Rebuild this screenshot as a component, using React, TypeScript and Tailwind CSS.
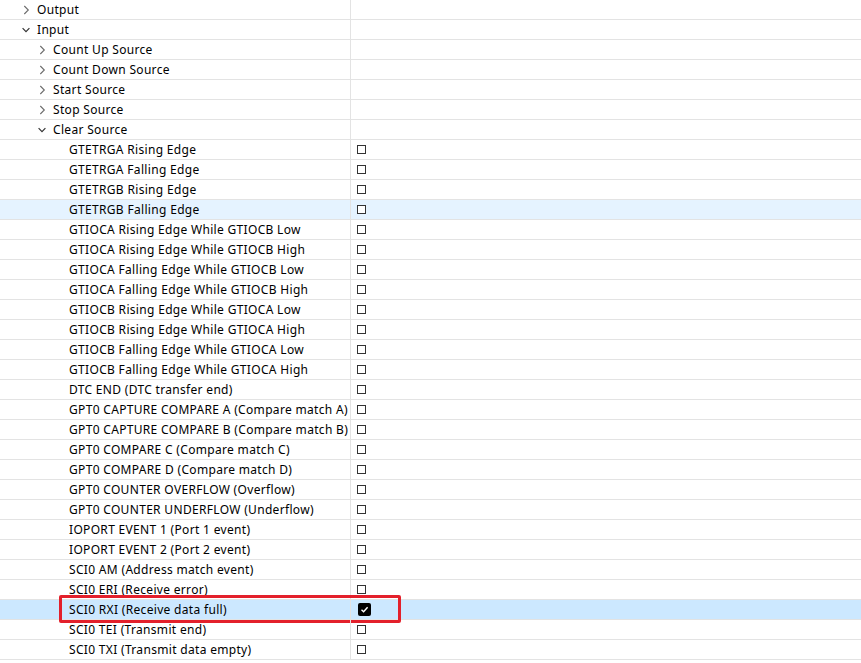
import React from 'react';

type Row = {
  label: string;
  level: 0 | 1 | 2;
  chevron?: 'right' | 'down';
  check?: boolean;
  checked?: boolean;
  hover?: boolean;
  selected?: boolean;
};

const clearItems = [
  'GTETRGA Rising Edge',
  'GTETRGA Falling Edge',
  'GTETRGB Rising Edge',
  'GTETRGB Falling Edge',
  'GTIOCA Rising Edge While GTIOCB Low',
  'GTIOCA Rising Edge While GTIOCB High',
  'GTIOCA Falling Edge While GTIOCB Low',
  'GTIOCA Falling Edge While GTIOCB High',
  'GTIOCB Rising Edge While GTIOCA Low',
  'GTIOCB Rising Edge While GTIOCA High',
  'GTIOCB Falling Edge While GTIOCA Low',
  'GTIOCB Falling Edge While GTIOCA High',
  'DTC END (DTC transfer end)',
  'GPT0 CAPTURE COMPARE A (Compare match A)',
  'GPT0 CAPTURE COMPARE B (Compare match B)',
  'GPT0 COMPARE C (Compare match C)',
  'GPT0 COMPARE D (Compare match D)',
  'GPT0 COUNTER OVERFLOW (Overflow)',
  'GPT0 COUNTER UNDERFLOW (Underflow)',
  'IOPORT EVENT 1 (Port 1 event)',
  'IOPORT EVENT 2 (Port 2 event)',
  'SCI0 AM (Address match event)',
  'SCI0 ERI (Receive error)',
  'SCI0 RXI (Receive data full)',
  'SCI0 TEI (Transmit end)',
  'SCI0 TXI (Transmit data empty)',
];

const rows: Row[] = [
  { label: 'Output', level: 0, chevron: 'right' },
  { label: 'Input', level: 0, chevron: 'down' },
  { label: 'Count Up Source', level: 1, chevron: 'right' },
  { label: 'Count Down Source', level: 1, chevron: 'right' },
  { label: 'Start Source', level: 1, chevron: 'right' },
  { label: 'Stop Source', level: 1, chevron: 'right' },
  { label: 'Clear Source', level: 1, chevron: 'down' },
  ...clearItems.map((label) => ({
    label,
    level: 2 as const,
    check: true,
    checked: label.startsWith('SCI0 RXI'),
    selected: label.startsWith('SCI0 RXI'),
    hover: label === 'GTETRGB Falling Edge',
  })),
];

// tree expander arrows
const Chevron = ({ dir }: { dir: 'right' | 'down' }) => (
  <svg width="9" height="10" viewBox="0 0 9 10" className="shrink-0">
    {dir === 'right' ? (
      <path d="M2.3 1 L6.3 5 L2.3 9" fill="none" stroke="#6b6b6b" strokeWidth="1.1" />
    ) : (
      <path d="M0.6 3.2 L4 6.6 L7.4 3.2" fill="none" stroke="#333" strokeWidth="1.2" />
    )}
  </svg>
);

const Box = ({ checked }: { checked?: boolean }) =>
  checked ? (
    <div className="flex h-[13px] w-[13px] items-center justify-center rounded-[2px] bg-black">
      <svg width="9" height="9" viewBox="0 0 9 9">
        <path d="M1.5 4.8 L3.6 6.8 L7.6 2.2" fill="none" stroke="#fff" strokeWidth="1.4" />
      </svg>
    </div>
  ) : (
    <div className="h-[9px] w-[9px] border border-[#333] bg-white" />
  );

const indent = ['pl-[22px]', 'pl-[38px]', 'pl-[69px]'];

export default function App() {
  return (
    <div className="h-[663px] w-[861px] overflow-hidden bg-white font-['Noto_Sans','Segoe_UI',sans-serif] text-[12px] tracking-[0.32px] text-black">
      {rows.map((row, i) => (
        <div
          key={`${row.label}-${i}`}
          className={`relative flex h-[20px] border-b border-[#e3e3e3] ${
            row.selected ? 'bg-[#cce8ff]' : row.hover ? 'bg-[#e5f3ff]' : ''
          }`}
        >
          <div className={`flex w-[351px] shrink-0 items-center gap-[6px] border-r border-[#e3e3e3] ${indent[row.level]}`}>
            {row.chevron && <Chevron dir={row.chevron} />}
            <span className="whitespace-nowrap leading-none">{row.label}</span>
          </div>
          <div className={`flex items-center ${row.checked ? 'pl-[7px]' : 'pl-[6px]'}`}>
            {row.check && <Box checked={row.checked} />}
          </div>
          {row.selected && (
            <div className="pointer-events-none absolute left-[59px] top-[-5px] h-[28px] w-[342px] rounded-[2px] border-[3px] border-[#e3202b]" />
          )}
        </div>
      ))}
    </div>
  );
}
